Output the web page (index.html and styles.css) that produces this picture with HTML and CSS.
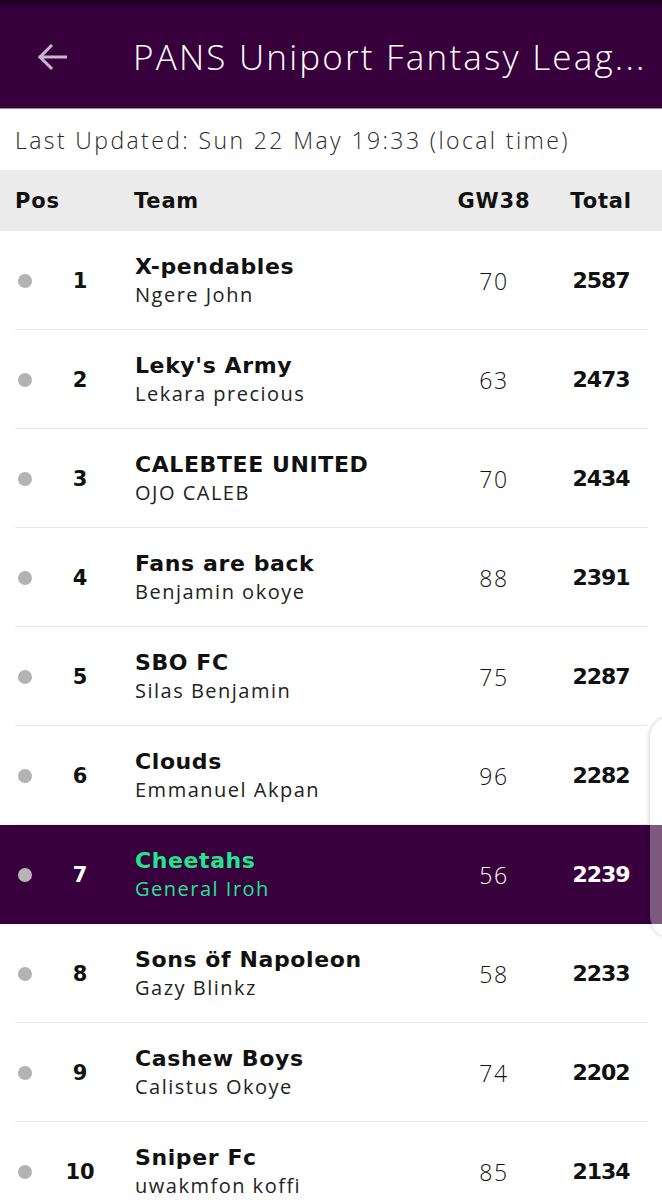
FILE: index.html
```html
<!DOCTYPE html>
<html lang="en">
<head>
<meta charset="utf-8">
<title>PANS Uniport Fantasy League</title>
<link rel="stylesheet" href="styles.css">
</head>
<body>
<div class="screen">
  <div class="statusbar"></div>
  <header class="appbar">
    <svg class="back" width="30" height="28" viewBox="0 0 30 28" aria-hidden="true">
      <path d="M29 14H3M14 3L3 14L14 25" fill="none" stroke="#c9b5cd" stroke-width="3" stroke-linecap="square"/>
    </svg>
    <h1 class="title">PANS Uniport Fantasy Leag...</h1>
  </header>
  <div class="updated">Last Updated: Sun 22 May 19:33 (local time)</div>
  <div class="thead grid">
    <span class="h-pos">Pos</span>
    <span class="h-team">Team</span>
    <span class="h-gw">GW38</span>
    <span class="h-total">Total</span>
  </div>
  <div class="rows">
    <div class="row grid"><span class="dot"></span><span class="pos">1</span><div class="team"><div class="tname">X-pendables</div><div class="mname">Ngere John</div></div><span class="gw">70</span><span class="total">2587</span></div>
    <div class="row grid"><span class="dot"></span><span class="pos">2</span><div class="team"><div class="tname">Leky's Army</div><div class="mname">Lekara precious</div></div><span class="gw">63</span><span class="total">2473</span></div>
    <div class="row grid"><span class="dot"></span><span class="pos">3</span><div class="team"><div class="tname">CALEBTEE UNITED</div><div class="mname">OJO CALEB</div></div><span class="gw">70</span><span class="total">2434</span></div>
    <div class="row grid"><span class="dot"></span><span class="pos">4</span><div class="team"><div class="tname">Fans are back</div><div class="mname">Benjamin okoye</div></div><span class="gw">88</span><span class="total">2391</span></div>
    <div class="row grid"><span class="dot"></span><span class="pos">5</span><div class="team"><div class="tname">SBO FC</div><div class="mname">Silas Benjamin</div></div><span class="gw">75</span><span class="total">2287</span></div>
    <div class="row grid"><span class="dot"></span><span class="pos">6</span><div class="team"><div class="tname">Clouds</div><div class="mname">Emmanuel Akpan</div></div><span class="gw">96</span><span class="total">2282</span></div>
    <div class="row grid mine"><span class="dot"></span><span class="pos">7</span><div class="team"><div class="tname">Cheetahs</div><div class="mname">General Iroh</div></div><span class="gw">56</span><span class="total">2239</span></div>
    <div class="row grid"><span class="dot"></span><span class="pos">8</span><div class="team"><div class="tname">Sons öf Napoleon</div><div class="mname">Gazy Blinkz</div></div><span class="gw">58</span><span class="total">2233</span></div>
    <div class="row grid"><span class="dot"></span><span class="pos">9</span><div class="team"><div class="tname">Cashew Boys</div><div class="mname">Calistus Okoye</div></div><span class="gw">74</span><span class="total">2202</span></div>
    <div class="row grid"><span class="dot"></span><span class="pos">10</span><div class="team"><div class="tname">Sniper Fc</div><div class="mname">uwakmfon koffi</div></div><span class="gw">85</span><span class="total">2134</span></div>
  </div>
  <div class="edge-panel"></div>
</div>
</body>
</html>
```

FILE: styles.css
```css
* { box-sizing: border-box; }
html, body { margin: 0; padding: 0; }
body {
  font-family: "Open Sans", "Liberation Sans", sans-serif;
  color: #111;
  background: #fff;
}
.screen {
  position: relative;
  width: 662px;
  height: 1204px;
  overflow: hidden;
}
.statusbar {
  height: 8px;
  background: linear-gradient(#1c001e, #33003a);
}
.appbar {
  height: 101px;
  background: #37003c;
  border-bottom: 1px solid #a487a8;
  display: flex;
  align-items: center;
  padding-left: 37px;
  padding-bottom: 3px;
}
.back { display: block; }
.title {
  margin: 0 0 0 66px;
  font-weight: 300;
  font-size: 35px;
  letter-spacing: 2.2px;
  color: #fff;
  white-space: nowrap;
}
.updated {
  height: 61px;
  display: flex;
  align-items: center;
  padding-left: 15px;
  font-size: 23px;
  font-weight: 300;
  letter-spacing: 2.4px;
  color: #2a2a2a;
}
.grid {
  display: grid;
  grid-template-columns: 50px 60px 25px 1fr 100px 7px 100px;
  padding-right: 11px;
  align-items: center;
}
.thead {
  height: 61px;
  background: #ebebeb;
  font-family: "DejaVu Sans", sans-serif;
  font-size: 21px;
  font-weight: 700;
  letter-spacing: 0.8px;
  color: #111;
}
.h-pos { grid-column: 1 / 3; padding-left: 15px; }
.h-team { grid-column: 4; margin-left: -1px; }
.h-gw { grid-column: 5; text-align: center; }
.h-total { grid-column: 7; text-align: center; }
.row {
  height: 99px;
  background: linear-gradient(#e9e9e9, #e9e9e9) no-repeat 15px 100% / 633px 1px;
}
.dot {
  grid-column: 1;
  justify-self: center;
  width: 14px;
  height: 14px;
  border-radius: 50%;
  background: #b3b3b3;
}
.pos {
  grid-column: 2;
  text-align: center;
  font-family: "DejaVu Sans", sans-serif;
  font-size: 21px;
  font-weight: 700;
}
.team { grid-column: 4; }
.tname {
  font-family: "DejaVu Sans", sans-serif;
  font-size: 22px;
  font-weight: 700;
  letter-spacing: 0.6px;
  line-height: 28px;
  white-space: nowrap;
}
.mname {
  font-size: 20px;
  font-weight: 400;
  letter-spacing: 1.5px;
  line-height: 28px;
  color: #222;
  white-space: nowrap;
}
.gw {
  grid-column: 5;
  text-align: center;
  font-size: 23px;
  font-weight: 300;
  letter-spacing: 1.5px;
}
.total {
  grid-column: 7;
  text-align: center;
  font-family: "DejaVu Sans", sans-serif;
  font-size: 22px;
  font-weight: 700;
  letter-spacing: -1px;
}
.row.mine {
  background: #38003c;
  color: #fff;
}
.row.mine .dot { background: #b8b4b8; }
.row.mine .tname, .row.mine .mname { color: #20e68e; }
.edge-panel {
  position: absolute;
  left: 650px;
  top: 716px;
  width: 30px;
  height: 222px;
  border-radius: 22px 0 0 22px;
  background: rgba(255, 255, 255, 0.35);
  box-shadow: -1px 0 4px rgba(0, 0, 0, 0.18);
}
```
